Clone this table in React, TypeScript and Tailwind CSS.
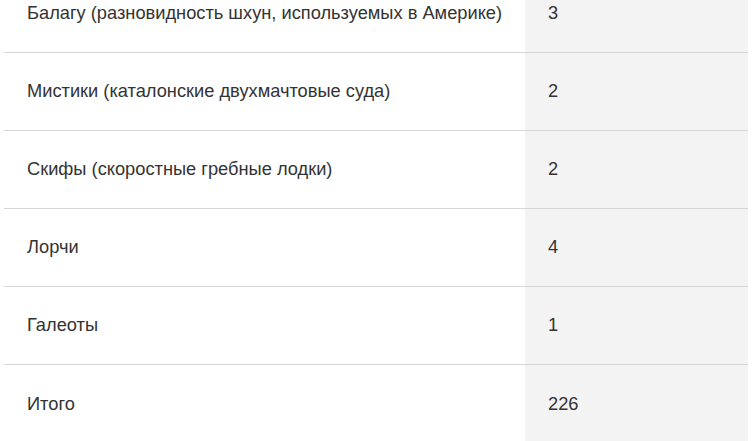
const rows = [
  { name: "Балагу (разновидность шхун, используемых в Америке)", count: "3" },
  { name: "Мистики (каталонские двухмачтовые суда)", count: "2" },
  { name: "Скифы (скоростные гребные лодки)", count: "2" },
  { name: "Лорчи", count: "4" },
  { name: "Галеоты", count: "1" },
  { name: "Итого", count: "226" },
];

export default function App() {
  return (
    <div className="h-[441px] overflow-hidden bg-white px-[4px] font-['Liberation_Sans',Arial,sans-serif] text-[18.25px] text-[#333]">
      <table className="-mt-[26px] w-full table-fixed border-collapse">
        <tbody>
          {rows.map((row, i) => (
            <tr
              key={row.name}
              className={i < rows.length - 1 ? "border-b border-[#d6d6d6]" : ""}
            >
              <td className="h-[78px] w-[521px] whitespace-nowrap pl-[23px] align-middle">{row.name}</td>
              <td className="h-[78px] bg-[#f3f3f3] px-[23px] align-middle">{row.count}</td>
            </tr>
          ))}
        </tbody>
      </table>
    </div>
  );
}
